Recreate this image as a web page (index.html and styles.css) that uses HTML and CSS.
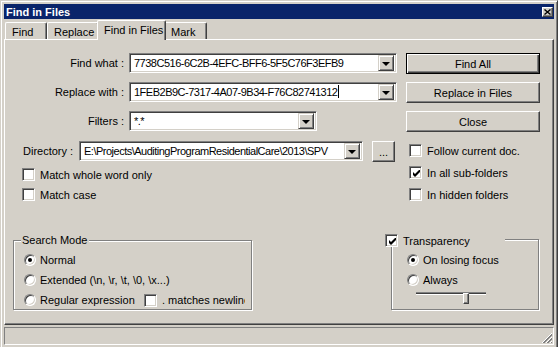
FILE: index.html
```html
<!DOCTYPE html>
<html lang="en">
<head>
  <meta charset="UTF-8" />
  <title>Find in Files</title>
  <link rel="stylesheet" href="styles.css">
</head>
<body>
  <div class="window">
    <div class="titlebar">
      <span class="title">Find in Files</span>
      <span class="close">
        <svg width="7" height="6" viewBox="0 0 7 6"><path d="M0.5 0.5 L6.5 5.5 M6.5 0.5 L0.5 5.5" stroke="#000" stroke-width="1.4" fill="none"/></svg>
      </span>
    </div>

    <div class="tabs">
      <div class="tab tab-find">Find</div>
      <div class="tab tab-replace">Replace</div>
      <div class="tab tab-fif active">Find in Files</div>
      <div class="tab tab-mark">Mark</div>
    </div>

    <div class="panel">
      <div class="top">
        <div class="left-col">
          <div class="row">
            <label class="label">Find what :</label>
            <div class="combo w-long"><span class="value">7738C516-6C2B-4EFC-BFF6-5F5C76F3EFB9</span><span class="drop"><i class="arrow"></i></span></div>
          </div>
          <div class="row row-replace">
            <label class="label">Replace with :</label>
            <div class="combo w-long"><span class="value">1FEB2B9C-7317-4A07-9B34-F76C82741312<i class="caret"></i></span><span class="drop"><i class="arrow"></i></span></div>
          </div>
          <div class="row row-filters">
            <label class="label">Filters :</label>
            <div class="combo w-short"><span class="value">*.*</span><span class="drop"><i class="arrow"></i></span></div>
          </div>
          <div class="row row-dir">
            <label class="label-dir">Directory :</label>
            <div class="combo w-dir"><span class="value">E:\Projects\AuditingProgramResidentialCare\2013\SPV</span><span class="drop"><i class="arrow"></i></span></div>
            <button class="btn btn-browse">...</button>
          </div>
          <div class="check check-left first"><span class="box"></span><span>Match whole word only</span></div>
          <div class="check check-left"><span class="box"></span><span>Match case</span></div>
        </div>

        <div class="right-col">
          <button class="btn btn-wide default">Find All</button>
          <button class="btn btn-wide">Replace in Files</button>
          <button class="btn btn-wide">Close</button>
          <div class="check check-right first"><span class="box"></span><span>Follow current doc.</span></div>
          <div class="check check-right"><span class="box checked"><svg width="7" height="7" viewBox="0 0 7 7"><path d="M0 2 L2 4 L7 -1 L7 2 L2 7 L0 5 Z" fill="#000"/></svg></span><span>In all sub-folders</span></div>
          <div class="check check-right"><span class="box"></span><span>In hidden folders</span></div>
        </div>
      </div>

      <div class="bottom">
        <div class="group group-search">
          <span class="group-title">Search Mode</span>
          <div class="radio-row"><span class="radio on"></span><span>Normal</span></div>
          <div class="radio-row"><span class="radio"></span><span>Extended (\n, \r, \t, \0, \x...)</span></div>
          <div class="radio-row">
            <div class="radio-regex"><span class="radio"></span><span>Regular expression</span></div>
            <div class="check newline"><span class="box"></span><span>. matches newline</span></div>
          </div>
        </div>

        <div class="group group-transp">
          <div class="check group-check"><span class="box checked"><svg width="7" height="7" viewBox="0 0 7 7"><path d="M0 2 L2 4 L7 -1 L7 2 L2 7 L0 5 Z" fill="#000"/></svg></span><span>Transparency</span></div>
          <div class="radio-row"><span class="radio on"></span><span>On losing focus</span></div>
          <div class="radio-row"><span class="radio"></span><span>Always</span></div>
          <div class="slider"><div class="track"></div><div class="thumb"></div></div>
        </div>
      </div>
    </div>

    <div class="statusbar">
      <svg class="grip" width="12" height="12" viewBox="0 0 12 12">
        <path d="M11 1 L1 11 M11 5 L5 11 M11 9 L9 11" stroke="#fff" stroke-width="1" fill="none"/>
        <path d="M11 2 L2 11 M11 3 L3 11 M11 6 L6 11 M11 7 L7 11 M11 10 L10 11" stroke="#808080" stroke-width="1" fill="none"/>
      </svg>
    </div>
  </div>
</body>
</html>
```

FILE: styles.css
```css
body {
  margin: 0;
  font-family: "Liberation Sans", Arial, sans-serif;
  font-size: 11px;
  color: #000;
  background: #d4d0c8;
  overflow: hidden;
}
.window {
  width: 558px;
  height: 349px;
  box-sizing: border-box;
  background: #d4d0c8;
  border: 1px solid;
  border-color: #d4d0c8 #404040 #404040 #d4d0c8;
  box-shadow: inset 1px 1px #fff, inset -1px -1px #808080;
  padding: 3px;
  display: flex;
  flex-direction: column;
}
.titlebar {
  height: 15px;
  flex: none;
  background: #0a246a;
  color: #fff;
  font-weight: bold;
  display: flex;
  align-items: center;
  justify-content: space-between;
  padding: 0 1px 0 2px;
}
.close {
  width: 11px;
  height: 10px;
  box-sizing: border-box;
  background: #d4d0c8;
  border: 1px solid;
  border-color: #fff #404040 #404040 #fff;
  box-shadow: inset -1px -1px #808080;
  display: flex;
  align-items: center;
  justify-content: center;
}
.close svg {
  display: block;
}

/* tabs */
.tabs {
  display: flex;
  align-items: flex-end;
  height: 19px;
  flex: none;
  margin-top: 1px;
  padding-left: 1px;
}
.tab {
  height: 17px;
  box-sizing: border-box;
  border-top: 1px solid #fff;
  border-left: 1px solid #fff;
  border-right: 1px solid #404040;
  box-shadow: inset -1px 0 #808080;
  border-radius: 2px 2px 0 0;
  padding: 2px 0 0 6px;
  display: flex;
  align-items: center;
  background: #d4d0c8;
}
.tab-find { width: 42px; }
.tab-replace { width: 52px; }
.tab-fif { width: 65px; }
.tab-mark { width: 43px; }
.tab.active {
  width: 69px;
  height: 20px;
  margin: 0 -2px -1px -2px;
  padding: 0 0 2px 6px;
  position: relative;
  z-index: 1;
}

/* panel */
.panel {
  height: 286px;
  flex: none;
  box-sizing: border-box;
  border: 1px solid;
  border-color: #fff #404040 #404040 #fff;
  box-shadow: inset -1px -1px #808080;
}
.top {
  display: flex;
  padding-top: 13px;
}
.left-col {
  width: 392px;
}
.right-col {
  width: 134px;
  margin-left: 9px;
  display: flex;
  flex-direction: column;
}
.row {
  display: flex;
  align-items: center;
  height: 20px;
}
.row-replace { margin-top: 9px; }
.row-filters { margin-top: 9px; }
.row-dir { margin-top: 10px; }
.label {
  width: 119px;
  text-align: right;
  margin-right: 5px;
  white-space: nowrap;
}
.label-dir {
  width: 56px;
  margin-left: 18px;
  white-space: nowrap;
}

/* combo box */
.combo {
  height: 20px;
  box-sizing: border-box;
  background: #fff;
  border: 1px solid;
  border-color: #808080 #fff #fff #808080;
  box-shadow: inset 1px 1px #404040, inset -1px -1px #d4d0c8;
  padding: 2px;
  display: flex;
  align-items: center;
}
.w-long { width: 268px; }
.w-short { width: 188px; }
.w-dir { width: 284px; }
.combo .value {
  flex: 1;
  min-width: 0;
  padding-left: 2px;
  white-space: nowrap;
  overflow: hidden;
  line-height: 16px;
  letter-spacing: -0.5px;
}
.caret {
  display: inline-block;
  width: 1px;
  height: 13px;
  background: #000;
  vertical-align: -2px;
  margin-left: 1px;
}
.drop {
  width: 16px;
  height: 16px;
  flex: none;
  box-sizing: border-box;
  background: #d4d0c8;
  border: 1px solid;
  border-color: #d4d0c8 #404040 #404040 #d4d0c8;
  box-shadow: inset 1px 1px #fff, inset -1px -1px #808080;
  display: flex;
  align-items: center;
  justify-content: center;
}
.arrow {
  width: 0;
  height: 0;
  border-left: 4px solid transparent;
  border-right: 4px solid transparent;
  border-top: 4px solid #000;
  margin-top: 1px;
}

/* buttons */
.btn {
  height: 21px;
  box-sizing: border-box;
  font: inherit;
  color: #000;
  background: #d4d0c8;
  border: 1px solid;
  border-color: #fff #404040 #404040 #fff;
  box-shadow: inset -1px -1px #808080;
  padding: 0;
}
.btn-wide {
  width: 134px;
  margin-top: 8px;
}
.btn-wide:first-child {
  margin-top: 0;
}
.btn.default {
  border-color: #000;
  box-shadow: inset 1px 1px #fff, inset -1px -1px #404040, inset -2px -2px #808080;
}
.btn-browse {
  width: 23px;
  margin-left: 9px;
  padding-top: 2px;
}

/* checkboxes */
.check {
  display: flex;
  align-items: center;
  height: 13px;
  white-space: nowrap;
}
.box {
  width: 13px;
  height: 13px;
  flex: none;
  box-sizing: border-box;
  background: #fff;
  border: 1px solid;
  border-color: #808080 #fff #fff #808080;
  box-shadow: inset 1px 1px #404040, inset -1px -1px #d4d0c8;
  margin-right: 5px;
  display: flex;
  align-items: center;
  justify-content: center;
}
.box svg {
  display: block;
  margin: 1px 0 0 1px;
}
.check-left {
  padding-left: 17px;
  margin-top: 7px;
}
.check-right {
  margin-left: 3px;
  margin-top: 9px;
}
.check-right.first {
  margin-top: 12px;
}

/* group boxes */
.bottom {
  display: flex;
  align-items: flex-start;
  margin-top: 38px;
}
.group {
  position: relative;
  box-sizing: border-box;
  border: 1px solid #808080;
  box-shadow: inset 1px 1px #fff, 1px 1px #fff;
}
.group-search {
  width: 239px;
  height: 70px;
  margin: 1px 0 0 8px;
  padding: 12px 0 0 10px;
}
.group-title {
  position: absolute;
  left: 7px;
  top: -7px;
  padding: 0 2px 0 1px;
  background: #d4d0c8;
  line-height: 13px;
}
.group-transp {
  width: 148px;
  height: 71px;
  margin-left: 139px;
  padding: 13px 0 0 15px;
}
.group-check {
  position: absolute;
  left: -7px;
  top: -6px;
  width: 120px;
  background: #d4d0c8;
}
.radio-row {
  display: flex;
  align-items: center;
  height: 14px;
  margin-top: 6px;
  white-space: nowrap;
}
.group-search .radio-row:nth-of-type(1),
.group-transp .radio-row:nth-of-type(2) {
  margin-top: 0;
}
.radio {
  width: 12px;
  height: 12px;
  flex: none;
  box-sizing: border-box;
  border-radius: 50%;
  background: #fff;
  border: 1px solid;
  border-color: #808080 #fff #fff #808080;
  box-shadow: inset 1px 1px #404040, inset -1px -1px #d4d0c8;
  margin-right: 4px;
  position: relative;
}
.radio.on::after {
  content: "";
  position: absolute;
  left: 3px;
  top: 3px;
  width: 4px;
  height: 4px;
  border-radius: 50%;
  background: #000;
}
.radio-regex {
  width: 120px;
  display: flex;
  align-items: center;
}
.newline {
  width: 101px;
  overflow: hidden;
}

/* slider */
.slider {
  position: relative;
  width: 70px;
  height: 13px;
  margin: 3px 0 0 9px;
}
.track {
  height: 3px;
  box-sizing: border-box;
  margin-top: 5px;
  border-top: 1px solid #808080;
  border-bottom: 1px solid #fff;
  background: #404040;
}
.thumb {
  position: absolute;
  left: 47px;
  top: 1px;
  width: 6px;
  height: 11px;
  box-sizing: border-box;
  background: #d4d0c8;
  border: 1px solid;
  border-color: #fff #404040 #404040 #fff;
  box-shadow: inset -1px -1px #808080;
}

/* status bar */
.statusbar {
  height: 18px;
  flex: none;
  margin-top: 2px;
  box-sizing: border-box;
  border: 1px solid;
  border-color: #808080 #fff #fff #808080;
  display: flex;
  justify-content: flex-end;
  align-items: flex-end;
}
.grip {
  display: block;
}
```
